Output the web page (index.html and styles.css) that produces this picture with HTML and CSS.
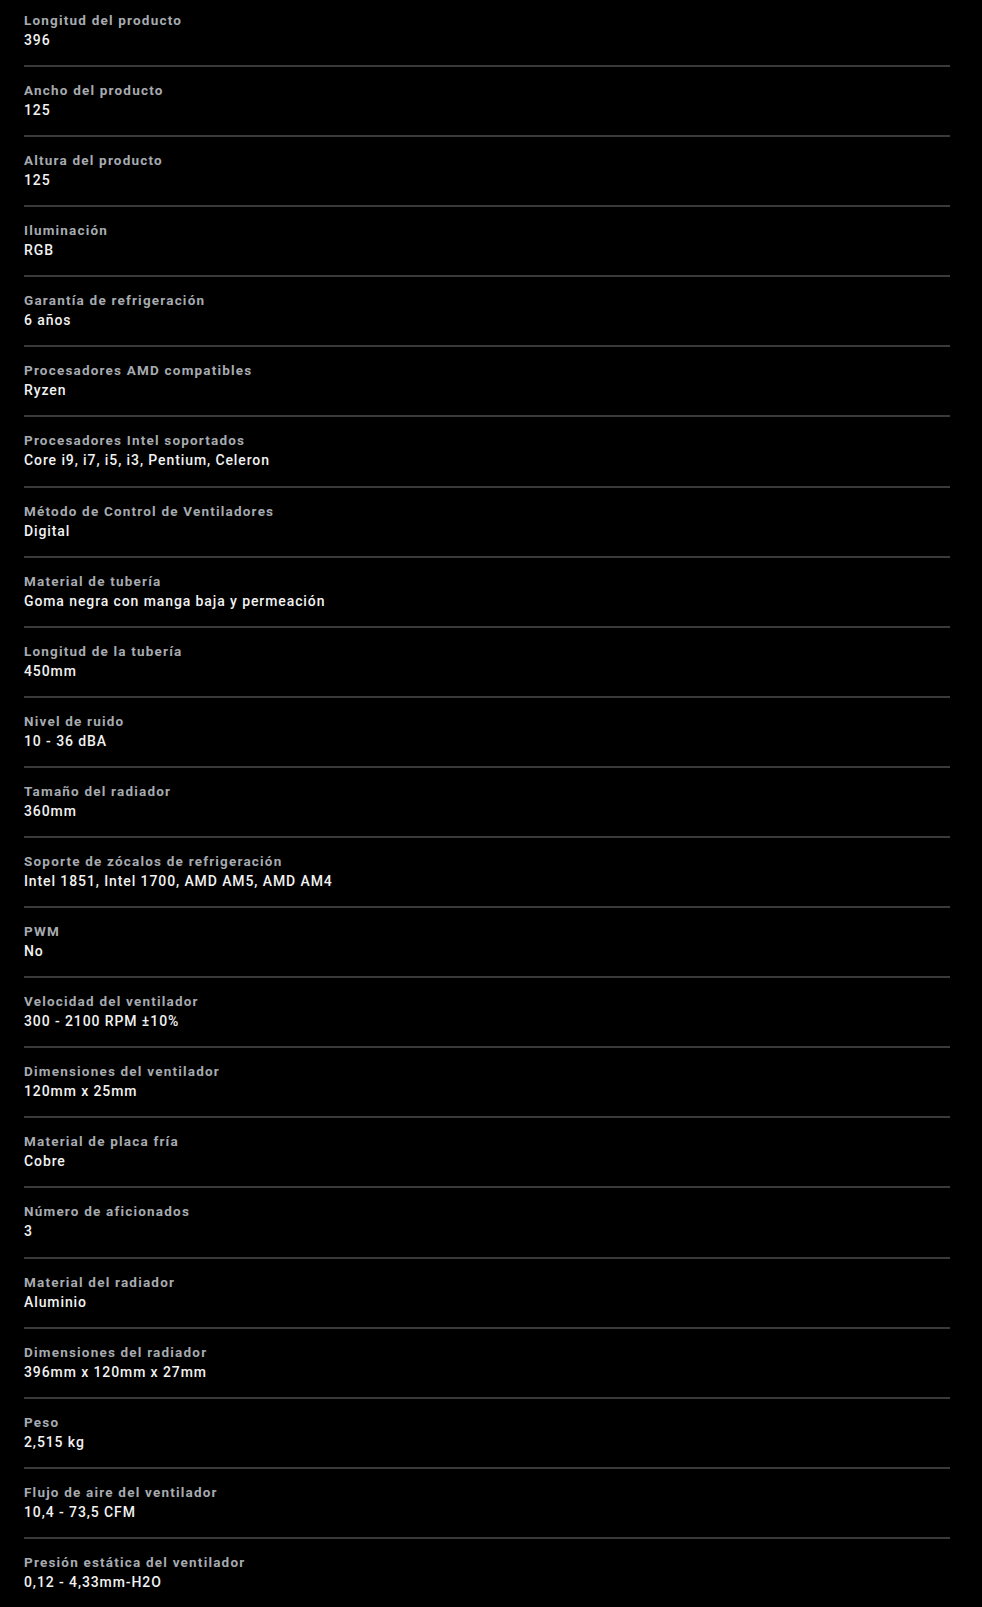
FILE: index.html
```html
<!DOCTYPE html>
<html lang="es">
<head>
<meta charset="utf-8">
<title>Especificaciones</title>
<link rel="stylesheet" href="styles.css">
</head>
<body>
<div class="specs">
  <div class="spec"><div class="label">Longitud del producto</div><div class="value">396</div></div>
  <div class="spec"><div class="label">Ancho del producto</div><div class="value">125</div></div>
  <div class="spec"><div class="label">Altura del producto</div><div class="value">125</div></div>
  <div class="spec"><div class="label">Iluminación</div><div class="value">RGB</div></div>
  <div class="spec"><div class="label">Garantía de refrigeración</div><div class="value">6 años</div></div>
  <div class="spec"><div class="label">Procesadores AMD compatibles</div><div class="value">Ryzen</div></div>
  <div class="spec"><div class="label">Procesadores Intel soportados</div><div class="value">Core i9, i7, i5, i3, Pentium, Celeron</div></div>
  <div class="spec"><div class="label">Método de Control de Ventiladores</div><div class="value">Digital</div></div>
  <div class="spec"><div class="label">Material de tubería</div><div class="value">Goma negra con manga baja y permeación</div></div>
  <div class="spec"><div class="label">Longitud de la tubería</div><div class="value">450mm</div></div>
  <div class="spec"><div class="label">Nivel de ruido</div><div class="value">10 - 36 dBA</div></div>
  <div class="spec"><div class="label">Tamaño del radiador</div><div class="value">360mm</div></div>
  <div class="spec"><div class="label">Soporte de zócalos de refrigeración</div><div class="value">Intel 1851, Intel 1700, AMD AM5, AMD AM4</div></div>
  <div class="spec"><div class="label">PWM</div><div class="value">No</div></div>
  <div class="spec"><div class="label">Velocidad del ventilador</div><div class="value">300 - 2100 RPM ±10%</div></div>
  <div class="spec"><div class="label">Dimensiones del ventilador</div><div class="value">120mm x 25mm</div></div>
  <div class="spec"><div class="label">Material de placa fría</div><div class="value">Cobre</div></div>
  <div class="spec"><div class="label">Número de aficionados</div><div class="value">3</div></div>
  <div class="spec"><div class="label">Material del radiador</div><div class="value">Aluminio</div></div>
  <div class="spec"><div class="label">Dimensiones del radiador</div><div class="value">396mm x 120mm x 27mm</div></div>
  <div class="spec"><div class="label">Peso</div><div class="value">2,515 kg</div></div>
  <div class="spec"><div class="label">Flujo de aire del ventilador</div><div class="value">10,4 - 73,5 CFM</div></div>
  <div class="spec"><div class="label">Presión estática del ventilador</div><div class="value">0,12 - 4,33mm-H2O</div></div>
</div>
</body>
</html>
```
FILE: styles.css
```css
html, body {
  margin: 0;
  padding: 0;
  background: #000;
}
body {
  font-family: Roboto, "Liberation Sans", sans-serif;
}
.specs {
  margin: 0 32px 0 24px;
  display: flex;
  flex-direction: column;
}
.spec {
  padding: 13px 0 15.1px;
  border-bottom: 2px solid #3a3a3a;
}
.spec:first-child {
  padding-top: 9.9px;
}
.label {
  font-size: 13.5px;
  line-height: 20px;
  font-weight: 700;
  letter-spacing: 1.2px;
  color: #a7abb0;
}
.value {
  font-size: 14px;
  line-height: 20px;
  font-weight: 500;
  letter-spacing: 0.9px;
  color: #f2f2f2;
}
```
